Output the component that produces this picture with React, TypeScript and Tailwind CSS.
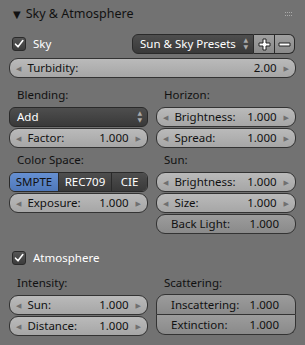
const font = { fontFamily: '"Noto Sans", "DejaVu Sans", sans-serif' };

function ArrowL() {
  return <span className="text-[7px] text-[#707070] leading-none">◀</span>;
}
function ArrowR() {
  return <span className="text-[7px] text-[#707070] leading-none">▶</span>;
}

function NumField({ label, value, arrows = true }: { label: string; value: string; arrows?: boolean }) {
  return (
    <div className="h-5 flex items-center rounded-[9px] border border-[#333] bg-gradient-to-b from-[#bababa] to-[#a6a6a6] px-[6px] text-[11.5px] text-[#111]">
      {arrows && <ArrowL />}
      <span className="ml-[6px]">{label}</span>
      <span className="ml-auto mr-[7px]">{value}</span>
      {arrows && <ArrowR />}
    </div>
  );
}

function PlainButton({ label, value, className }: { label: string; value: string; className: string }) {
  return (
    <div className={"flex items-center border-[#333] bg-gradient-to-b from-[#9c9c9c] to-[#8a8a8a] pl-[14px] pr-[16px] text-[11.5px] text-[#111] " + className}>
      <span>{label}</span>
      <span className="ml-auto">{value}</span>
    </div>
  );
}

function Check({ label }: { label: string }) {
  return (
    <div className="flex items-center gap-[7px] pl-[3px]">
      <div className="w-[14px] h-[14px] rounded-[3px] border border-[#2a2a2a] bg-gradient-to-b from-[#555] to-[#3c3c3c] flex items-center justify-center">
        <svg width="10" height="10" viewBox="0 0 10 10">
          <path d="M1.5 5.2 L4 7.8 L8.8 1.6" stroke="#fff" strokeWidth="1.6" fill="none" strokeLinecap="round" strokeLinejoin="round" />
        </svg>
      </div>
      <span className="text-[11.5px] text-white">{label}</span>
    </div>
  );
}

function Label({ text }: { text: string }) {
  return <div className="h-[22px] flex items-center pl-2 text-[11.5px] text-[#111]">{text}</div>;
}

function UpDown() {
  return (
    <span className="ml-auto flex flex-col text-[6px] leading-[7px] text-[#aaa]">
      <span>▲</span>
      <span>▼</span>
    </span>
  );
}

export default function App() {
  return (
    <div className="w-[305px] h-[345px] bg-[#727272] overflow-hidden" style={font}>
      <div className="h-[28px] flex items-center pl-[13px] pr-[13px]">
        <span className="text-[10px] text-[#111] mr-[5px]">▼</span>
        <span className="text-[12.5px] text-[#111]">Sky &amp; Atmosphere</span>
        <div className="ml-auto grid grid-cols-4 gap-x-[1px] gap-y-[2px]">
          {Array.from({ length: 8 }).map((_, i) => (
            <div key={i} className="w-[1px] h-[1px] bg-[#aaa]" />
          ))}
        </div>
      </div>

      <div className="px-[9px]">
        <div className="flex items-center h-[20px] mt-[6px]">
          <Check label="Sky" />
          <div className="ml-auto flex h-[20px] mr-[1px]">
            <div className="w-[122px] flex items-center rounded-l-[6px] border border-[#2a2a2a] bg-gradient-to-b from-[#4e4e4e] to-[#393939] pl-[7px] pr-[5px] text-[11.5px] text-white">
              <span>Sun &amp; Sky Presets</span>
              <UpDown />
            </div>
            <div className="w-[21px] flex items-center justify-center border-y border-r border-[#2a2a2a] bg-gradient-to-b from-[#a0a0a0] to-[#8a8a8a]">
              <svg width="13" height="13" viewBox="0 0 13 13">
                <path d="M5 1h3v4h4v3H8v4H5V8H1V5h4z" fill="#fff" stroke="#222" strokeWidth="1" />
              </svg>
            </div>
            <div className="w-[20px] flex items-center justify-center rounded-r-[6px] border-y border-r border-[#2a2a2a] bg-gradient-to-b from-[#a0a0a0] to-[#8a8a8a]">
              <svg width="13" height="13" viewBox="0 0 13 13">
                <path d="M1 5h11v3H1z" fill="#fff" stroke="#222" strokeWidth="1" />
              </svg>
            </div>
          </div>
        </div>

        <div className="mt-[4px]">
          <NumField label="Turbidity:" value="2.00" />
        </div>

        <div className="grid grid-cols-[139px_140px] gap-x-[8px] mt-[6px]">
          <div className="flex flex-col gap-[1px]">
            <Label text="Blending:" />
            <div className="h-5 flex items-center rounded-[6px] border border-[#2a2a2a] bg-gradient-to-b from-[#4e4e4e] to-[#393939] pl-[7px] pr-[5px] text-[11.5px] text-white">
              <span>Add</span>
              <UpDown />
            </div>
            <NumField label="Factor:" value="1.000" />
            <Label text="Color Space:" />
            <div className="h-5 flex border border-[#2a2a2a] rounded-[6px] overflow-hidden text-[11.5px]">
              <div className="w-[49px] flex items-center justify-center bg-gradient-to-b from-[#6690d2] to-[#4f78ba] text-[#111] border-r border-[#2a2a2a]">SMPTE</div>
              <div className="w-[53px] flex items-center justify-center bg-gradient-to-b from-[#4e4e4e] to-[#393939] text-white border-r border-[#2a2a2a]">REC709</div>
              <div className="flex-1 flex items-center justify-center bg-gradient-to-b from-[#4e4e4e] to-[#393939] text-white">CIE</div>
            </div>
            <NumField label="Exposure:" value="1.000" />
          </div>
          <div className="flex flex-col gap-[1px]">
            <Label text="Horizon:" />
            <NumField label="Brightness:" value="1.000" />
            <NumField label="Spread:" value="1.000" />
            <Label text="Sun:" />
            <NumField label="Brightness:" value="1.000" />
            <NumField label="Size:" value="1.000" />
            <PlainButton label="Back Light:" value="1.000" className="h-5 rounded-[9px] border" />
          </div>
        </div>

        <div className="h-[20px] flex items-center mt-[14px]">
          <Check label="Atmosphere" />
        </div>

        <div className="grid grid-cols-[139px_140px] gap-x-[8px] mt-[4px]">
          <div className="flex flex-col gap-[1px]">
            <Label text="Intensity:" />
            <NumField label="Sun:" value="1.000" />
            <NumField label="Distance:" value="1.000" />
          </div>
          <div className="flex flex-col">
            <Label text="Scattering:" />
            <PlainButton label="Inscattering:" value="1.000" className="rounded-t-[9px] border h-[21px]" />
            <PlainButton label="Extinction:" value="1.000" className="rounded-b-[9px] border-x border-b h-[20px]" />
          </div>
        </div>
      </div>
    </div>
  );
}
